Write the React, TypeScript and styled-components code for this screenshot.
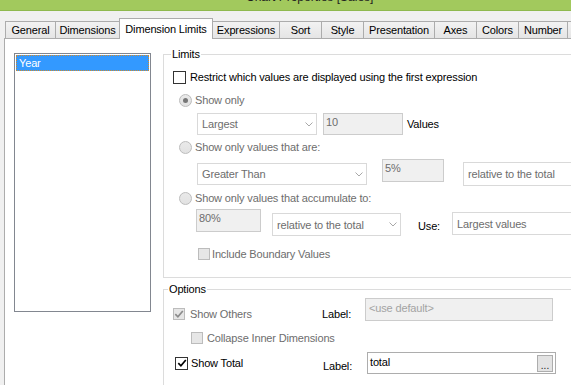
import React from 'react';
import styled, { createGlobalStyle } from 'styled-components';

const GlobalStyle = createGlobalStyle`
  html, body { margin: 0; padding: 0; }
  body {
    width: 571px; height: 385px; overflow: hidden; background: #f0f0f0;
    font-family: "Liberation Sans", Arial, sans-serif; font-size: 11px;
    letter-spacing: -0.15px; color: #000;
  }
  * { box-sizing: border-box; }
`;

const Window = styled.div`
  width: 571px; height: 385px; overflow: hidden;
  display: flex; flex-direction: column; background: #f0f0f0;
`;

const TitleBar = styled.div`
  height: 11px; flex: none; background: #a2c95d; border-bottom: 1px solid #8fb94e;
  display: flex; align-items: flex-end; padding-left: 246px; overflow: hidden;
`;

const TitleText = styled.span`
  font-size: 12px; line-height: 14px; color: #1e1e1e; margin-bottom: 6px;
  white-space: nowrap; letter-spacing: 0;
`;

const Body = styled.div`
  flex: 1; display: flex; flex-direction: column; padding: 7px 0 0 4px; min-height: 0;
`;

const TabStrip = styled.div`
  display: flex; align-items: flex-end; height: 20px; padding-left: 1px; flex: none;
`;

const Tab = styled.div<{ $w: number; $active?: boolean }>`
  flex: none; width: ${p => p.$w}px; height: ${p => (p.$active ? 21 : 17)}px;
  margin-left: -1px; margin-bottom: ${p => (p.$active ? -1 : 0)}px;
  border: 1px solid #acacac; border-bottom: none;
  background: ${p => (p.$active ? '#ffffff' : 'linear-gradient(#f2f2f2, #e5e5e5)')};
  position: relative; z-index: ${p => (p.$active ? 2 : 1)};
  display: flex; align-items: center; justify-content: center;
  white-space: nowrap; overflow: hidden; line-height: 14px;
  &:first-child { margin-left: 0; }
`;

const Panel = styled.div`
  flex: none; width: 620px; height: 400px; background: #fff;
  border: 1px solid #acacac; display: flex; align-items: flex-start;
  padding: 14px 0 0 9px;
`;

const ListBox = styled.div`
  flex: none; width: 137px; height: 259px; border: 1px solid #828790; padding: 1px;
`;

const ListItem = styled.div<{ $selected?: boolean }>`
  height: 16px; line-height: 14px; padding-left: 2px;
  background: ${p => (p.$selected ? '#3399ff' : 'transparent')};
  color: ${p => (p.$selected ? '#fff' : '#000')};
  border: 1px dotted ${p => (p.$selected ? '#d08a2c' : 'transparent')};
`;

const RightColumn = styled.div`
  flex: none; width: 440px; margin-left: 12px; margin-top: 1px;
  display: flex; flex-direction: column;
`;

const Group = styled.div<{ $pt: number; $pb: number; $mt?: number }>`
  position: relative; border: 1px solid #dcdcdc;
  padding: ${p => p.$pt}px 0 ${p => p.$pb}px 0;
  margin-top: ${p => p.$mt ?? 0}px;
`;

const Legend = styled.span<{ $lx: number }>`
  position: absolute; top: -7px; left: ${p => p.$lx}px;
  padding: 0 1px; background: #fff; line-height: 13px;
`;

const Row = styled.div<{ $h: number; $indent: number; $align?: string }>`
  display: flex; align-items: ${p => p.$align ?? 'center'};
  height: ${p => p.$h}px; padding-left: ${p => p.$indent}px; white-space: nowrap;
`;

const Text = styled.span<{ $dim?: boolean; $ml?: number; $mt?: number; $w?: number }>`
  color: ${p => (p.$dim ? '#6d6d6d' : '#000')};
  margin-left: ${p => p.$ml ?? 0}px; margin-top: ${p => p.$mt ?? 0}px;
  line-height: 14px; flex: none;
  ${p => (p.$w ? `width: ${p.$w}px;` : '')}
`;

const Box = styled.span<{ $dim?: boolean; $size: number }>`
  flex: none; width: ${p => p.$size}px; height: ${p => p.$size}px;
  border: 1px solid ${p => (p.$dim ? '#bcbcbc' : '#333333')};
  background: ${p => (p.$dim ? '#e6e6e6' : '#ffffff')};
  display: inline-flex; align-items: center; justify-content: center;
`;

const RadioCircle = styled.span`
  flex: none; width: 13px; height: 13px; border-radius: 50%;
  border: 1px solid #bcbcbc; background: linear-gradient(#e9e9e9, #e2e2e2);
  display: inline-flex; align-items: center; justify-content: center;
`;

const RadioDot = styled.span`
  width: 5px; height: 5px; border-radius: 50%; background: #777;
`;

const Select = styled.div<{ $w: number; $h: number; $mt?: number; $ml?: number }>`
  flex: none; width: ${p => p.$w}px; height: ${p => p.$h}px;
  margin-top: ${p => p.$mt ?? 0}px; margin-left: ${p => p.$ml ?? 0}px;
  border: 1px solid #d9d9d9; background: #fff; color: #6d6d6d;
  display: flex; align-items: center; justify-content: space-between;
  padding: 0 3px 0 4px; line-height: 14px;
`;

const Field = styled.div<{ $w: number; $h: number; $mt?: number; $ml?: number; $mb?: number; $off?: boolean }>`
  flex: none; width: ${p => p.$w}px; height: ${p => p.$h}px;
  margin-top: ${p => p.$mt ?? 0}px; margin-left: ${p => p.$ml ?? 0}px;
  margin-bottom: ${p => p.$mb ?? 0}px;
  border: 1px solid ${p => (p.$off ? '#cccccc' : '#adadad')};
  background: ${p => (p.$off ? '#f0f0f0' : '#ffffff')};
  color: ${p => (p.$off ? '#6d6d6d' : '#000')};
  display: flex; align-items: flex-start; justify-content: space-between;
  padding: 1px 2px 0 2px; line-height: 14px;
`;

const Placeholder = styled.span`
  color: #a3a3a3; padding-left: 1px; padding-top: 1px;
`;

const Value = styled.span`
  padding-top: 1px;
`;

const DotsButton = styled.div`
  flex: none; width: 16px; height: 17px; margin-top: 1px;
  border: 1px solid #adadad; background: #e3e3e3;
  display: flex; align-items: flex-end; justify-content: center;
  font-size: 10px; line-height: 11px; letter-spacing: 0; color: #222;
`;

const Lead = styled.div<{ $w: number }>`
  flex: none; width: ${p => p.$w}px; display: flex; align-items: center;
`;

function Check({ dim }: { dim?: boolean }) {
  return (
    <svg width="10" height="10" viewBox="0 0 10 10">
      <path d="M1.3 5.2 L3.9 7.8 L8.8 2" fill="none" stroke={dim ? '#8c8c8c' : '#000'} strokeWidth="1.7" />
    </svg>
  );
}

function CheckBox({ checked, dim, size = 13 }: { checked?: boolean; dim?: boolean; size?: number }) {
  return <Box $dim={dim} $size={size}>{checked && <Check dim={dim} />}</Box>;
}

function Radio({ checked }: { checked?: boolean }) {
  return <RadioCircle>{checked && <RadioDot />}</RadioCircle>;
}

function Chevron() {
  return (
    <svg width="8" height="5" viewBox="0 0 8 5">
      <path d="M0.5 0.5 L4 4 L7.5 0.5" fill="none" stroke="#a8a8a8" strokeWidth="1" />
    </svg>
  );
}

function Dropdown(props: { label: string; w: number; h: number; mt?: number; ml?: number }) {
  return (
    <Select $w={props.w} $h={props.h} $mt={props.mt} $ml={props.ml}>
      <span>{props.label}</span>
      <Chevron />
    </Select>
  );
}

const tabs: [string, number][] = [
  ['General', 51], ['Dimensions', 65], ['Dimension Limits', 94], ['Expressions', 68],
  ['Sort', 43], ['Style', 43], ['Presentation', 72], ['Axes', 43], ['Colors', 43],
  ['Number', 50], ['', 50],
];

export default function App() {
  return (
    <>
      <GlobalStyle />
      <Window>
        <TitleBar>
          <TitleText>Chart Properties [Sales]</TitleText>
        </TitleBar>
        <Body>
          <TabStrip>
            {tabs.map(([name, w], i) => (
              <Tab key={i} $w={w} $active={name === 'Dimension Limits'}>{name}</Tab>
            ))}
          </TabStrip>
          <Panel>
            <ListBox>
              <ListItem $selected>Year</ListItem>
            </ListBox>
            <RightColumn>
              <Group $pt={10} $pb={6}>
                <Legend $lx={7}>Limits</Legend>
                <Row $h={24} $indent={9}>
                  <CheckBox />
                  <Text $ml={4}>Restrict which values are displayed using the first expression</Text>
                </Row>
                <Row $h={22} $indent={15}>
                  <Radio checked />
                  <Text $dim $ml={3}>Show only</Text>
                </Row>
                <Row $h={26} $indent={33}>
                  <Dropdown label="Largest" w={120} h={22} />
                  <Field $off $w={80} $h={22} $ml={6}>10</Field>
                  <Text $ml={4}>Values</Text>
                </Row>
                <Row $h={20} $indent={15}>
                  <Radio />
                  <Text $dim $ml={3}>Show only values that are:</Text>
                </Row>
                <Row $h={30} $indent={33} $align="flex-start">
                  <Dropdown label="Greater Than" w={170} h={22} mt={6} />
                  <Field $off $w={62} $h={23} $mt={2} $ml={15}>5%</Field>
                  <Dropdown label="relative to the total" w={130} h={24} mt={5} ml={19} />
                </Row>
                <Row $h={22} $indent={15}>
                  <Radio />
                  <Text $dim $ml={3}>Show only values that accumulate to:</Text>
                </Row>
                <Row $h={28} $indent={32} $align="flex-start">
                  <Field $off $w={65} $h={23}>80%</Field>
                  <Dropdown label="relative to the total" w={129} h={23} mt={4} ml={11} />
                  <Text $ml={17} $mt={10} $w={34}>Use:</Text>
                  <Dropdown label="Largest values" w={140} h={23} mt={3} />
                </Row>
                <Row $h={34} $indent={34}>
                  <CheckBox dim size={12} />
                  <Text $dim $ml={2}>Include Boundary Values</Text>
                </Row>
              </Group>
              <Group $pt={8} $pb={20} $mt={11}>
                <Legend $lx={4}>Options</Legend>
                <Row $h={32} $indent={9}>
                  <Lead $w={149}>
                    <CheckBox checked dim size={12} />
                    <Text $dim $ml={5}>Show Others</Text>
                  </Lead>
                  <Text $w={43}>Label:</Text>
                  <Field $off $w={188} $h={23} $mb={9}>
                    <Placeholder>&lt;use default&gt;</Placeholder>
                  </Field>
                </Row>
                <Row $h={16} $indent={27}>
                  <CheckBox dim size={12} />
                  <Text $dim $ml={4}>Collapse Inner Dimensions</Text>
                </Row>
                <Row $h={34} $indent={11}>
                  <Lead $w={148}>
                    <CheckBox checked size={13} />
                    <Text $ml={3}>Show Total</Text>
                  </Lead>
                  <Text $w={44} $mt={6}>Label:</Text>
                  <Field $w={189} $h={22}>
                    <Value>total</Value>
                    <DotsButton>...</DotsButton>
                  </Field>
                </Row>
              </Group>
            </RightColumn>
          </Panel>
        </Body>
      </Window>
    </>
  );
}
